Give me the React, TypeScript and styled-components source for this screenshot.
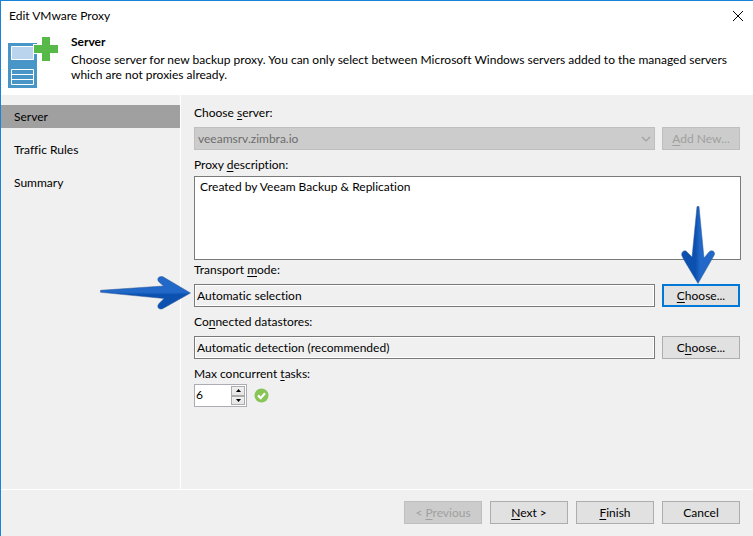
import React from "react";
import styled, { createGlobalStyle } from "styled-components";

const GlobalStyle = createGlobalStyle`
  *, *::before, *::after { box-sizing: border-box; }
  body { margin: 0; background: #f0f0f0; }
  body, button, input, textarea, select {
    font-family: Lato, "Open Sans", sans-serif;
    font-size: 12px;
    line-height: 16px;
    font-variant-ligatures: none;
    color: #000;
  }
  button, input, textarea, select { margin: 0; border-radius: 0; outline: none; }
`;

const Dialog = styled.form`
  display: flex;
  flex-direction: column;
  min-height: 100vh;
  border-top: 1px solid #1883d7;
  border-left: 1px solid #1883d7;
  background: #f0f0f0;
`;

const TitleBar = styled.header`
  display: flex;
  align-items: center;
  justify-content: space-between;
  height: 29px;
  padding: 0 9px 0 8px;
  background: #fff;
`;

const CloseButton = styled.button`
  display: flex;
  padding: 0;
  border: 0;
  background: none;
`;

const Banner = styled.section`
  display: flex;
  gap: 12px;
  min-height: 65px;
  padding: 4px 16px 0 7px;
  background: #fff;
`;

const BannerText = styled.div`
  flex: 1;
`;

const Heading = styled.h1`
  margin: 0 0 2px;
  font-size: 12px;
  line-height: 16px;
  font-weight: 700;
`;

const Description = styled.p`
  margin: 0;
  line-height: 15px;
`;

const Body = styled.div`
  display: flex;
  flex: 1;
`;

const Sidebar = styled.nav`
  display: flex;
  flex-direction: column;
  gap: 10px;
  width: 180px;
  padding-top: 10px;
  border-right: 1px solid #fff;
`;

const Step = styled.a<{ $active?: boolean }>`
  height: 23px;
  padding-left: 13px;
  line-height: 23px;
  color: #000;
  text-decoration: none;
  background: ${(p) => (p.$active ? "#a0a0a0" : "transparent")};
`;

const Content = styled.main`
  flex: 1;
  padding: 10px 12px 0 13px;
`;

const Label = styled.label<{ $above?: number; $below?: number }>`
  display: block;
  padding-top: ${(p) => p.$above ?? 7}px;
  padding-bottom: ${(p) => p.$below ?? 6}px;
`;

const Key = styled.span`
  text-decoration: underline;
  text-underline-offset: 2px;
  text-decoration-thickness: 1px;
`;

const Row = styled.div`
  display: flex;
  gap: 7px;
  padding-right: 1px;
`;

const PushButton = styled.button<{ $focused?: boolean }>`
  width: 78px;
  height: 23px;
  padding: 0;
  line-height: 19px;
  text-align: center;
  border: ${(p) => (p.$focused ? "2px solid #0078d7" : "1px solid #adadad")};
  background: #e1e1e1;
  &:disabled {
    color: #a0a0a0;
    border-color: #bfbfbf;
    background: #ccc;
  }
`;

const SelectBox = styled.div`
  display: grid;
  flex: 1;
  align-items: center;
  > * { grid-area: 1 / 1; }
  > svg { justify-self: end; margin-right: 4px; pointer-events: none; }
`;

const Select = styled.select`
  appearance: none;
  width: 100%;
  height: 23px;
  padding: 0 20px 0 3px;
  border: 1px solid #bfbfbf;
  background: #ccc;
  &:disabled { color: #6d6d6d; opacity: 1; }
`;

const NotesBox = styled.textarea`
  display: block;
  width: 100%;
  height: 84px;
  padding: 2px 5px;
  resize: none;
  border: 1px solid #7a7a7a;
  background: #fff;
`;

const ReadOnlyField = styled.input`
  flex: 1;
  min-width: 0;
  height: 23px;
  padding: 0 2px;
  border: 1px solid #7a7a7a;
  background: #f0f0f0;
  box-shadow: inset 0 0 0 1px #fff;
`;

const TaskRow = styled.div`
  display: flex;
  align-items: center;
  gap: 7px;
`;

const Spinner = styled.div`
  display: flex;
  width: 53px;
  height: 23px;
  padding: 1px;
  border: 1px solid #abadb3;
  background: #fff;
`;

const SpinnerInput = styled.input`
  flex: 1;
  min-width: 0;
  height: 17px;
  padding: 0;
  border: 0;
  background: none;
`;

const SpinnerKeys = styled.div`
  display: flex;
  flex-direction: column;
  width: 14px;
`;

const SpinnerKey = styled.button`
  display: flex;
  flex: 1;
  align-items: center;
  justify-content: center;
  padding: 0;
  border: 1px solid #acacac;
  background: linear-gradient(#f0f0f0, #e5e5e5);
`;

const Footer = styled.footer`
  display: flex;
  justify-content: flex-end;
  gap: 8px;
  height: 47px;
  padding: 11px 13px 0;
  border-top: 1px solid #fff;
`;

/* Pointers laid over the form, each ending at the control it marks */
const PointerAnchor = styled.div`
  position: relative;
  display: flex;
  flex: 1;
  min-width: 0;
  > svg { position: absolute; right: 100%; top: -8px; margin-right: 3px; pointer-events: none; }
`;

const ButtonAnchor = styled.div`
  position: relative;
  display: flex;
  > svg { position: absolute; bottom: 100%; left: 19px; pointer-events: none; }
`;

const CloseIcon = () => (
  <svg width="12" height="12" viewBox="0 0 12 12" aria-hidden="true">
    <path d="M1 1 11 11M11 1 1 11" stroke="#000" fill="none" />
  </svg>
);

const ServerIcon = () => (
  <svg width="51" height="54" viewBox="0 0 51 54" aria-hidden="true">
    <path fill="#4796c7" d="M0 9h29v45H0z" />
    <path fill="#bbd4ee" stroke="#fff" d="M3.5 12.500h22v13h-22z" />
    <path fill="none" stroke="#fff" d="M3.500 35.500h22v15h-22zM3 40.500h23M3 45.500h23" />
    <path fill="#fff" d="M25 10h8V2h10v8h8v10h-8v8H33v-8h-8z" />
    <path fill="#57b947" d="M26 11h8V3h8v8h8v8h-8v8h-8v-8h-8z" />
  </svg>
);

const CheckIcon = () => (
  <svg width="15" height="15" viewBox="0 0 15 15" role="img" aria-label="Valid">
    <circle cx="7.500" cy="7.500" r="7" fill="#86c556" />
    <path d="m4 7.400 2.700 2.700 4.300-4.800" fill="none" stroke="#fff" strokeWidth="2.200" />
  </svg>
);

const RightPointer = () => (
  <svg width="91" height="36" viewBox="0 0 91 36" aria-hidden="true">
    <defs>
      <linearGradient id="across" x1="0" y1="0" x2="0" y2="1">
        <stop offset=".48" stopColor="#2168c8" />
        <stop offset=".56" stopColor="#0c51b0" />
      </linearGradient>
    </defs>
    <path
      fill="url(#across)"
      stroke="#345d98"
      strokeWidth=".5"
      d="M.5 14.300 63.500 10 59 6C56 3 59-.5 63 .8L90.500 17 63 32.500C59 34.500 56 31 59 27.500L64 22.500.5 16.300z"
    />
  </svg>
);

const DownPointer = () => (
  <svg width="34" height="78" viewBox="0 0 34 78" aria-hidden="true">
    <defs>
      <linearGradient id="along" x1="0" y1="0" x2="1" y2="0">
        <stop offset=".42" stopColor="#0c51b0" />
        <stop offset=".56" stopColor="#2168c8" />
      </linearGradient>
    </defs>
    <path
      fill="url(#along)"
      stroke="#345d98"
      strokeWidth=".5"
      d="M16 .5h2L23 52 28 46C31 43 35 46 33 49.500L31 53 17 77.500 3 54 1 50C-.5 46 4 43 6 46L11 51z"
    />
  </svg>
);

const StepArrow = ({ down }: { down?: boolean }) => (
  <svg width="5" height="3" viewBox="0 0 5 3" aria-hidden="true">
    <path d={down ? "M0 0h5L2.500 3z" : "M0 3h5L2.500 0z"} />
  </svg>
);

export default function App() {
  return (
    <>
      <GlobalStyle />
      <Dialog onSubmit={(e) => e.preventDefault()}>
        <TitleBar>
          <span>Edit VMware Proxy</span>
          <CloseButton type="button" aria-label="Close"><CloseIcon /></CloseButton>
        </TitleBar>
        <Banner>
          <ServerIcon />
          <BannerText>
            <Heading>Server</Heading>
            <Description>
              Choose server for new backup proxy. You can only select between Microsoft Windows
              servers added to the managed servers which are not proxies already.
            </Description>
          </BannerText>
        </Banner>
        <Body>
          <Sidebar>
            <Step href="#server" $active aria-current="step">Server</Step>
            <Step href="#traffic">Traffic Rules</Step>
            <Step href="#summary">Summary</Step>
          </Sidebar>
          <Content>
            <Label htmlFor="server" $above={0}>Choose <Key>s</Key>erver:</Label>
            <Row>
              <SelectBox>
                <Select id="server" disabled>
                  <option>veeamsrv.zimbra.io</option>
                </Select>
                <svg width="10" height="6" viewBox="0 0 10 6" aria-hidden="true">
                  <path d="m1 1 4 4 4-4" fill="none" stroke="#a0a0a0" strokeWidth="1.200" />
                </svg>
              </SelectBox>
              <PushButton type="button" disabled><Key>A</Key>dd New...</PushButton>
            </Row>
            <Label htmlFor="description" $below={3}>Proxy <Key>d</Key>escription:</Label>
            <NotesBox id="description" defaultValue="Created by Veeam Backup & Replication" />
            <Label htmlFor="transport" $above={2}>Transport <Key>m</Key>ode:</Label>
            <Row>
              <PointerAnchor>
                <ReadOnlyField id="transport" readOnly value="Automatic selection" />
                <RightPointer />
              </PointerAnchor>
              <ButtonAnchor>
                <PushButton type="button" $focused><Key>C</Key>hoose...</PushButton>
                <DownPointer />
              </ButtonAnchor>
            </Row>
            <Label htmlFor="datastores">Co<Key>n</Key>nected datastores:</Label>
            <Row>
              <ReadOnlyField id="datastores" readOnly value="Automatic detection (recommended)" />
              <PushButton type="button">C<Key>h</Key>oose...</PushButton>
            </Row>
            <Label htmlFor="tasks" $below={2}>Max concurrent <Key>t</Key>asks:</Label>
            <TaskRow>
              <Spinner>
                <SpinnerInput id="tasks" inputMode="numeric" defaultValue="6" />
                <SpinnerKeys>
                  <SpinnerKey type="button" aria-label="Increase"><StepArrow /></SpinnerKey>
                  <SpinnerKey type="button" aria-label="Decrease"><StepArrow down /></SpinnerKey>
                </SpinnerKeys>
              </Spinner>
              <CheckIcon />
            </TaskRow>
          </Content>
        </Body>
        <Footer>
          <PushButton type="button" disabled>&lt; <Key>P</Key>revious</PushButton>
          <PushButton type="submit"><Key>N</Key>ext &gt;</PushButton>
          <PushButton type="button"><Key>F</Key>inish</PushButton>
          <PushButton type="button">Cancel</PushButton>
        </Footer>
      </Dialog>
    </>
  );
}
